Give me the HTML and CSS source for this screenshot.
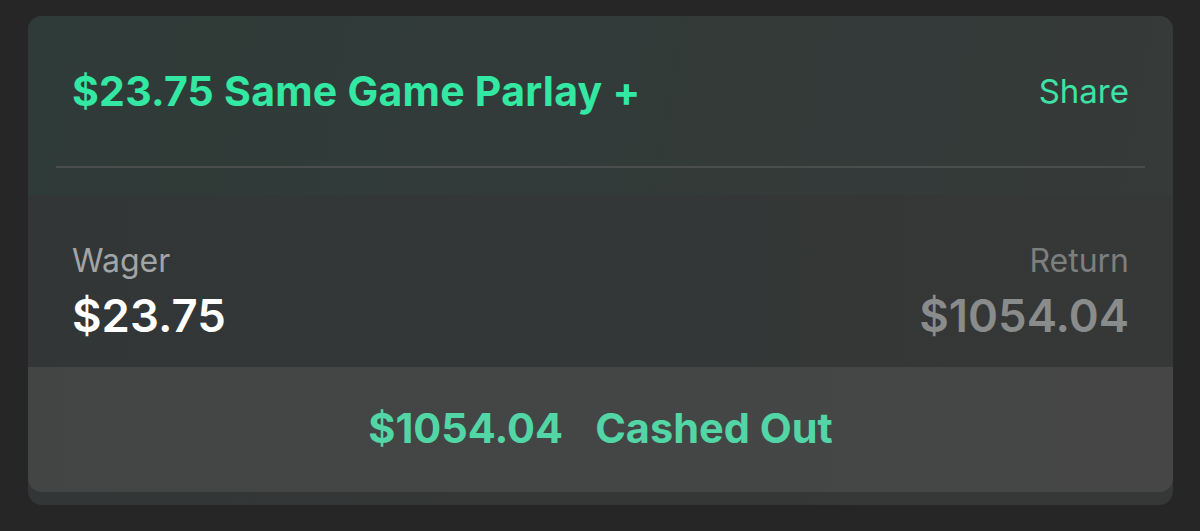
FILE: index.html
```html
<!DOCTYPE html>
<html lang="en">
<head>
<meta charset="utf-8">
<title>Bet slip</title>
<link rel="stylesheet" href="styles.css">
</head>
<body>
  <div class="card">
    <div class="header">
      <div class="title-row">
        <div class="title">$23.75 Same Game Parlay +</div>
        <div class="share">Share</div>
      </div>
      <div class="divider"></div>
    </div>
    <div class="body">
      <div class="col">
        <div class="label">Wager</div>
        <div class="amount">$23.75</div>
      </div>
      <div class="col col-right">
        <div class="label label-dim">Return</div>
        <div class="amount amount-dim">$1054.04</div>
      </div>
    </div>
    <div class="bar">
      <span class="bar-amount">$1054.04</span>
      <span class="bar-status">Cashed Out</span>
    </div>
  </div>
</body>
</html>
```

FILE: styles.css
```css
* { box-sizing: border-box; }
html, body { margin: 0; }
body {
  background: #262626;
  padding: 16px 27px 26px 28px;
  font-family: Inter, "Liberation Sans", Arial, sans-serif;
  -webkit-font-smoothing: antialiased;
}
.card {
  width: 1145px;
  height: 489px;
  border-radius: 14px;
  overflow: hidden;
  display: flex;
  flex-direction: column;
  background: linear-gradient(90deg, #333636 0%, #363737 100%);
  padding-bottom: 13px;
}
.header {
  height: 179px;
  background: linear-gradient(100deg, #2f3b38 0%, #323b39 45%, #363a39 100%);
}
.title-row {
  height: 150px;
  display: flex;
  align-items: center;
  justify-content: space-between;
  padding: 0 44px;
}
.title {
  color: #33e8a3;
  font-weight: 700;
  font-size: 41px;
  letter-spacing: 0.25px;
}
.share {
  color: #3ee2a6;
  font-weight: 400;
  font-size: 33px;
}
.divider {
  height: 2px;
  margin: 0 28px;
  background: #4a4f4e;
}
.body {
  flex: 1;
  display: flex;
  justify-content: space-between;
  padding: 47px 44px 0;
  background: linear-gradient(90deg, #323636 0%, #343737 50%, #363737 100%);
}
.col { display: flex; flex-direction: column; }
.col-right { align-items: flex-end; }
.label {
  color: #a2a5a5;
  font-size: 32px;
  line-height: 38px;
}
.label-dim { color: #7d7f7f; }
.amount {
  color: #ffffff;
  font-size: 45.5px;
  font-weight: 600;
  line-height: 54px;
  margin-top: 9px;
}
.amount-dim { color: #8a8b8b; }
.bar {
  height: 125px;
  flex: none;
  display: flex;
  align-items: center;
  justify-content: center;
  gap: 32px;
  background: linear-gradient(90deg, #424544 0%, #444646 50%, #464646 100%);
  border-radius: 0 0 14px 14px;
  color: #52d6a6;
  font-weight: 700;
  font-size: 41.5px;
  padding-bottom: 3px;
}
```
